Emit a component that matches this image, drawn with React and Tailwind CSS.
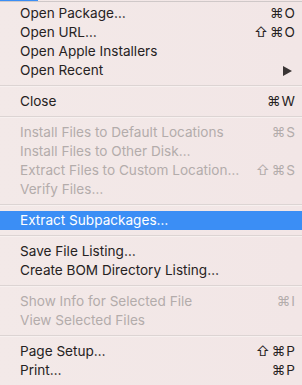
const groups = [
  [
    { label: "Open Package…", keys: "⌘O" },
    { label: "Open URL…", shift: true, keys: "⌘O" },
    { label: "Open Apple Installers" },
    { label: "Open Recent", submenu: true },
  ],
  [{ label: "Close", keys: "⌘W" }],
  [
    { label: "Install Files to Default Locations", keys: "⌘S", disabled: true },
    { label: "Install Files to Other Disk…", disabled: true },
    { label: "Extract Files to Custom Location…", shift: true, keys: "⌘S", disabled: true },
    { label: "Verify Files…", disabled: true },
  ],
  [{ label: "Extract Subpackages…", active: true }],
  [
    { label: "Save File Listing…" },
    { label: "Create BOM Directory Listing…" },
  ],
  [
    { label: "Show Info for Selected File", keys: "⌘I", disabled: true },
    { label: "View Selected Files", disabled: true },
  ],
  [
    { label: "Page Setup…", shift: true, keys: "⌘P" },
    { label: "Print…", keys: "⌘P" },
  ],
];

const Item = ({ label, keys, shift, disabled, active, submenu }) => {
  const color = active
    ? "bg-[#3b8ef5] text-white"
    : disabled
      ? "text-[#b3acab]"
      : "text-[#262222]";

  return (
    <div className={`flex h-[19px] items-center justify-between pl-5 pr-[6px] ${color}`}>
      <span>{label}</span>
      {keys && (
        <span className="flex items-center">
          {shift && <span className="mr-[2px]">⇧</span>}
          <span className="tracking-[1px]">{keys}</span>
        </span>
      )}
      {submenu && (
        <svg width="9" height="10" viewBox="0 0 9 10" className="mr-[4px]">
          <path d="M0 0 L9 5 L0 10 Z" fill="#3a3434" />
        </svg>
      )}
    </div>
  );
};

const Separator = () => (
  <div className="flex h-[12px] flex-col justify-center">
    <div className="h-px bg-[#dcd4d3]" />
    <div className="h-px bg-[#f7f0ef]" />
  </div>
);

export default function App() {
  return (
    <div
      className="h-[385px] w-[302px] overflow-hidden bg-gradient-to-r from-[#f3e9e8] to-[#f2e6e6] text-[13.6px]"
      style={{ fontFamily: 'Inter, "DejaVu Sans", sans-serif' }}
    >
      {/* menu bar edge */}
      <div className="h-px w-[38px] bg-[#3b8ef5]" />
      <div className="h-px bg-[#cfc8c8]" />
      <div className="pt-[2px]">
        {groups.map((group, i) => (
          <div key={i}>
            {i > 0 && <Separator />}
            {group.map((item) => (
              <Item key={item.label} {...item} />
            ))}
          </div>
        ))}
      </div>
    </div>
  );
}
